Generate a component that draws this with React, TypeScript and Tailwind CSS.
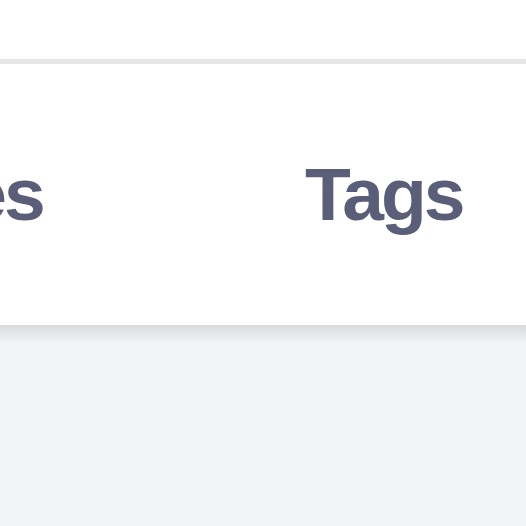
export default function App() {
	return (
		<div className="w-[526px] h-[526px] overflow-hidden bg-[#f2f3f5] flex flex-col">
			<div className="h-[59px] bg-white shrink-0" />
			<div className="h-[5px] bg-[#e6e6e6] shrink-0" />
			<div className="h-[261px] bg-white shrink-0 flex items-center relative overflow-hidden">
				<div className="flex items-baseline font-['Liberation_Sans',Arial,sans-serif] font-bold text-[75px] tracking-[-3px] text-[#5a5e78] leading-none">
					<span className="ml-[-134px] w-[439px] shrink-0">Sizes</span>
					<span className="shrink-0">Tags</span>
				</div>
			</div>
			<div className="h-[18px] shrink-0 bg-gradient-to-b from-[#d9dadd] to-[#f2f3f5]" />
		</div>
	);
}
